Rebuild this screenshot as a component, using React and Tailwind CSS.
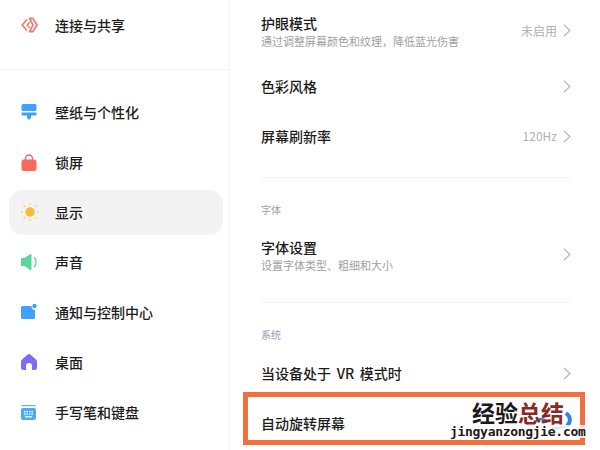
import React from 'react';

const font = { fontFamily: '"Noto Sans CJK SC", "Noto Sans", sans-serif' };

const ConnectIcon = () => (
    <svg width="17" height="16" viewBox="0 0 17 16" fill="none" stroke="#ee7a6c" strokeWidth="1.700" strokeLinejoin="round" strokeLinecap="round">
        <path d="M5.500 3 1.200 8l4.300 5" />
        <path d="M8.500 1.300h3.300L16 8l-4.200 6.700H8.500L12 8z" />
        <path d="M8.200 5.500 6.300 8l1.900 2.500" strokeWidth="1.400" />
    </svg>
);

const BrushIcon = () => (
    <svg width="16" height="17" viewBox="0 0 16 17" fill="#3ea2fb">
        <rect x="0.500" y="0" width="15" height="7" rx="1.500" />
        <path d="M0.500 8.500h15v2a1 1 0 0 1-1 1H10v2.200L8 16l-2-2.300V11.500H1.500a1 1 0 0 1-1-1z" />
    </svg>
);

const LockIcon = () => (
    <svg width="16" height="17" viewBox="0 0 16 17">
        <path d="M4.500 7V4.500a3.500 3.500 0 0 1 7 0V7" fill="none" stroke="#f9695c" strokeWidth="1.500" />
        <rect x="0.500" y="5.500" width="15" height="11.500" rx="2.500" fill="#f9695c" />
    </svg>
);

const SunIcon = () => (
    <svg width="18" height="18" viewBox="0 0 18 18" fill="#f7bb3a">
        <circle cx="9" cy="9" r="4.700" />
        {[[9, 1], [9, 17], [1, 9], [17, 9], [3.300, 3.300], [14.700, 3.300], [3.300, 14.700], [14.700, 14.700]].map(([x, y], i) => (
            <circle key={i} cx={x} cy={y} r="1" fill="#f9d27c" />
        ))}
    </svg>
);

const SoundIcon = () => (
    <svg width="17" height="16" viewBox="0 0 17 16" fill="#5cd49a">
        <path d="M0 5a1 1 0 0 1 1-1h2.500L9 0.300A1 1 0 0 1 10.500 1v14a1 1 0 0 1-1.500 0.700L3.500 12H1a1 1 0 0 1-1-1z" />
        <path d="M13.500 3.500c2 2.500 2 6.500 0 9" fill="none" stroke="#5cd49a" strokeWidth="1.300" strokeLinecap="round" />
    </svg>
);

const NotifyIcon = () => (
    <svg width="16" height="16" viewBox="0 0 16 16" fill="#3ea2fb">
        <path d="M1.500 2H10.500C10.500 4.500 12 6 14 6V13.500a1.500 1.500 0 0 1-1.500 1.500h-11A1.500 1.500 0 0 1 0 13.500v-10A1.500 1.500 0 0 1 1.500 2z" />
        <circle cx="13.500" cy="2" r="2.200" />
    </svg>
);

const HomeIcon = () => (
    <svg width="16" height="16" viewBox="0 0 16 16" fill="#7a6cf5">
        <path fillRule="evenodd" d="M6.700 0.600a2 2 0 0 1 2.600 0l5.700 4.800a2.500 2.500 0 0 1 1 2V13.500A2.500 2.500 0 0 1 13.500 16H11V12a3 3 0 0 0-6 0v4H2.500A2.500 2.500 0 0 1 0 13.500V7.400a2.500 2.500 0 0 1 1-2z" />
    </svg>
);

const KeyboardIcon = () => (
    <svg width="15" height="15" viewBox="0 0 15 15">
        <rect x="0.500" y="0" width="14" height="1.200" fill="#5bb4f7" />
        <rect x="0" y="3" width="15" height="12" rx="2" fill="#4aabf9" />
        {[0, 1, 2, 3].map(i => <rect key={i} x={3 + i * 2.500} y="6" width="1.400" height="1.400" fill="#fff" />)}
        {[0, 1, 2, 3].map(i => <rect key={i} x={3 + i * 2.500} y="8.500" width="1.400" height="1.400" fill="#fff" />)}
        <rect x="4" y="11.200" width="7" height="1.200" fill="#fff" />
    </svg>
);

const Chevron = () => (
    <svg width="8" height="13" viewBox="0 0 8 13" fill="none" stroke="#b4b4b4" strokeWidth="1.100" className="ml-[6px]">
        <path d="M1 1l6 5.500L1 12" />
    </svg>
);

const NavRow = ({ icon, label, active }) => (
    <div className={`h-[50px] flex items-center text-[14px] font-medium text-[#1c1c1c] ${active ? 'relative' : ''}`}>
        {active && <div className="absolute left-[9px] right-[6px] top-[3px] bottom-[2px] bg-[#f3f3f3] rounded-[14px]" />}
        <div className="relative w-[55px] pl-[21px] flex items-center">{icon}</div>
        <span className="relative">{label}</span>
    </div>
);

const Row = ({ title, sub, value, h, chevron = true }) => (
    <div className={`flex items-center justify-between pr-[29px] ${h}`}>
        <div>
            <div className="text-[14px] leading-[20px] font-medium text-[#1c1c1c] [word-spacing:2.5px]">{title}</div>
            {sub && <div className="text-[11px] leading-[16px] text-[#a0a0a0]">{sub}</div>}
        </div>
        {chevron && (
            <div className="flex items-center text-[12px] text-[#b0b0b0]">
                {value}
                <Chevron />
            </div>
        )}
    </div>
);

export default function App() {
    return (
        <div style={font} className="w-[600px] h-[450px] overflow-hidden bg-white flex">
            {/* Sidebar */}
            <div className="w-[230px] flex-none border-r border-[#f5f5f5]">
                <div className="h-[70px] border-b border-[#f3f3f3] pb-[18px]">
                    <NavRow icon={<ConnectIcon />} label="连接与共享" />
                </div>
                <div className="pt-[17px]">
                    <NavRow icon={<BrushIcon />} label="壁纸与个性化" />
                    <NavRow icon={<LockIcon />} label="锁屏" />
                    <NavRow icon={<SunIcon />} label="显示" active />
                    <NavRow icon={<SoundIcon />} label="声音" />
                    <NavRow icon={<NotifyIcon />} label="通知与控制中心" />
                    <NavRow icon={<HomeIcon />} label="桌面" />
                    <NavRow icon={<KeyboardIcon />} label="手写笔和键盘" />
                </div>
            </div>

            {/* Content */}
            <div className="flex-1 pl-[31px] relative">
                <Row title="护眼模式" sub="通过调整屏幕颜色和纹理，降低蓝光伤害" value="未启用" h="h-[61px]" />
                <Row title="色彩风格" h="h-[50px]" />
                <Row title="屏幕刷新率" value="120Hz" h="h-[50px]" />

                <div className="mt-[16px] mr-[29px] border-t border-[#f3f3f3]" />
                <div className="mt-[25px] text-[10px] leading-[14px] text-[#9d9db5]">字体</div>
                <Row title="字体设置" sub="设置字体类型、粗细和大小" h="h-[75px]" />

                <div className="mt-[10px] mr-[29px] border-t border-[#f3f3f3]" />
                <div className="mt-[25px] text-[10px] leading-[14px] text-[#9d9db5]">系统</div>
                <Row title="当设备处于 VR 模式时" h="h-[62px]" />
                <Row title="自动旋转屏幕" h="h-[38px]" chevron={false} />

                {/* Highlight box drawn over the row */}
                <div className="absolute left-[13px] top-[392px] w-[342px] h-[53px] border-[5px] border-[#f0703f]" />

                {/* Watermark */}
                <div className="absolute left-[220px] top-[398px] w-[136px] h-[44px] leading-none">
                    <svg className="absolute left-[82px] top-[14px]" width="40" height="20" viewBox="0 0 40 20" fill="none" stroke="#2f86dd" strokeWidth="2.500">
                        <path d="M4 9c5-4 7-1 11 0" />
                        <path d="M34 1c5 4 5 9 1 13" strokeWidth="4" />
                        <path d="M20 16c3 1 9 0 13-2" />
                    </svg>
                    <div className="absolute left-[22px] top-[3px] flex text-[23px] leading-[22px] font-bold whitespace-nowrap">
                        <div className="text-[#1a1a1a]">经验</div>
                        <div className="text-[#8a2a25]">总结</div>
                    </div>
                    <div className="absolute left-0 top-[27px] text-[13px] font-bold text-[#1a1a1a] tracking-[-0.3px] whitespace-nowrap bg-white/80" style={{ fontFamily: '"DejaVu Sans Mono", monospace' }}>
                        jingyanzongjie.com
                    </div>
                </div>
            </div>
        </div>
    );
}
